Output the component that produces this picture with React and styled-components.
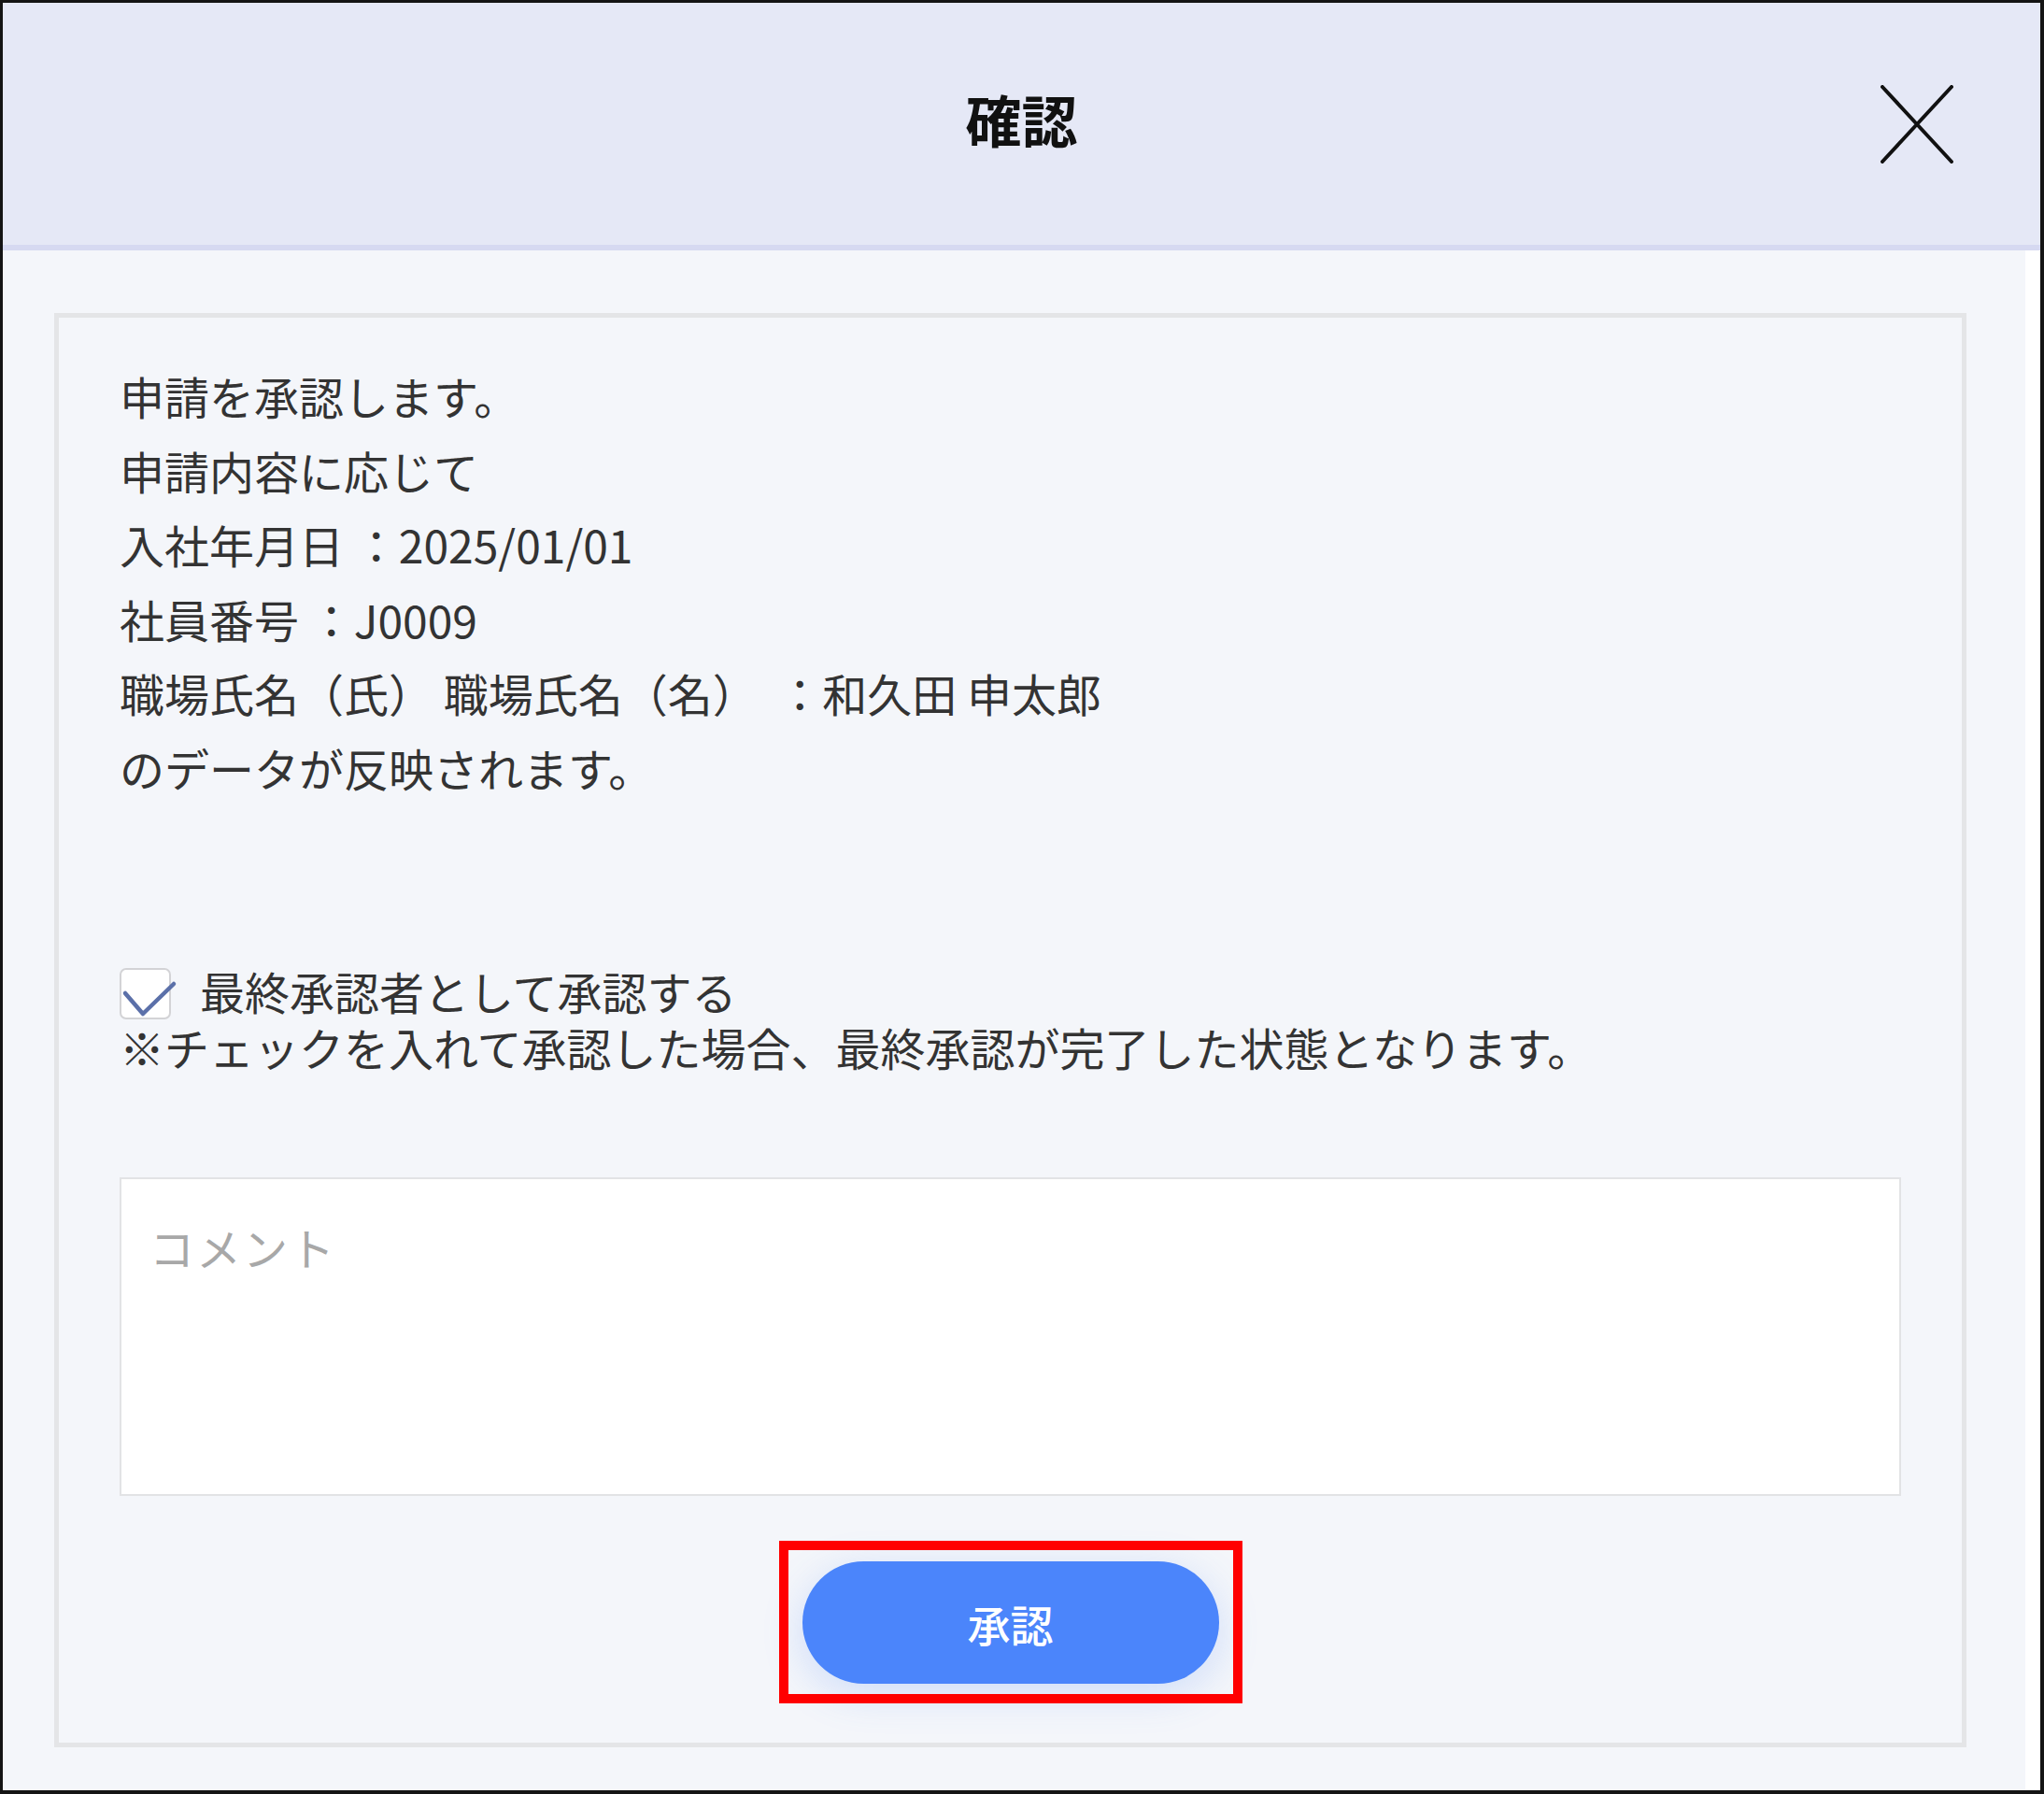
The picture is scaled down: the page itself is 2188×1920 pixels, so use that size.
import React from 'react';
import styled, { createGlobalStyle } from 'styled-components';

const GlobalStyle = createGlobalStyle`
    html, body {
        margin: 0;
        padding: 0;
        background: #ffffff;
    }
    * {
        box-sizing: border-box;
    }
`;

const font = `"Noto Sans CJK JP", "Noto Sans", sans-serif`;

const Frame = styled.div`
    width: 2188px;
    height: 1920px;
    border-style: solid;
    border-color: #141414;
    border-width: 3px 4px 4px 3px;
    display: flex;
    flex-direction: column;
    font-family: ${font};
    color: #333333;
`;

const Header = styled.header`
    height: 265px;
    flex-shrink: 0;
    background: #e5e8f6;
    border-bottom: 6px solid #d6d9f1;
    display: grid;
    grid-template-columns: 1fr auto 1fr;
    align-items: center;
`;

const Title = styled.h1`
    grid-column: 2;
    margin: 0 0 12px;
    font-size: 60px;
    font-weight: 700;
    line-height: 1;
    color: #111111;
`;

const CloseButton = styled.button`
    grid-column: 3;
    justify-self: end;
    margin-right: 93px;
    width: 78px;
    height: 84px;
    padding: 0;
    border: 0;
    background: transparent;
    cursor: pointer;
    display: flex;
`;

const Body = styled.div`
    flex: 1;
    display: flex;
`;

const Main = styled.main`
    flex: 1;
    background: #f4f6fa;
    padding: 67px 63px 0 55px;
`;

const Gutter = styled.div`
    width: 16px;
    background: #ffffff;
`;

const Panel = styled.section`
    border: 5px solid #e4e5e7;
    background: #f4f6fa;
    padding: 44px 65px 63px 65px;
    display: flex;
    flex-direction: column;
`;

const Message = styled.div`
    font-size: 48px;
    line-height: 79.5px;
`;

const Line = styled.p`
    margin: 0;
    white-space: pre;
`;

const CheckRow = styled.label`
    margin-top: 169px;
    display: flex;
    align-items: center;
    gap: 31px;
    height: 60px;
    font-size: 48px;
    line-height: 60px;
    cursor: pointer;
`;

const CheckBox = styled.span`
    position: relative;
    width: 55px;
    height: 55px;
    flex-shrink: 0;
    margin-top: 6px;
    border: 2px solid #d3d3d6;
    border-radius: 7px;
    background: #ffffff;

    svg {
        position: absolute;
        left: -2px;
        top: -2px;
        overflow: visible;
    }
`;

const Note = styled.p`
    margin: 0;
    font-size: 48px;
    line-height: 60px;
`;

const Comment = styled.textarea`
    margin-top: 110px;
    height: 341px;
    width: 100%;
    resize: none;
    border: 2px solid #e2e3e5;
    background: #ffffff;
    padding: 42px 30px;
    font-family: ${font};
    font-size: 48px;
    line-height: 60px;
    color: #333333;
    outline: none;

    &::placeholder {
        color: #a8a8a8;
        letter-spacing: 2px;
    }
`;

const Actions = styled.div`
    margin-top: 70px;
    display: flex;
    justify-content: center;
`;

const ButtonWrap = styled.div`
    position: relative;
`;

const ApproveButton = styled.button`
    width: 446px;
    height: 131px;
    border: 0;
    border-radius: 66px;
    background: #4b85fb;
    color: #ffffff;
    font-family: ${font};
    font-size: 46px;
    font-weight: 500;
    box-shadow: 0 10px 44px rgba(75, 133, 251, 0.22);
    cursor: pointer;
`;

const Highlight = styled.span`
    position: absolute;
    top: -22px;
    bottom: -21px;
    left: -25px;
    right: -25px;
    border: 10px solid #ff0000;
    pointer-events: none;
`;

const lines = [
    '申請を承認します。',
    '申請内容に応じて',
    '入社年月日 ：2025/01/01',
    '社員番号 ：J0009',
    '職場氏名（氏） 職場氏名（名）  ：和久田 申太郎',
    'のデータが反映されます。',
];

export default function App() {
    return (
        <>
            <GlobalStyle />
            <Frame>
                <Header>
                    <Title>確認</Title>
                    <CloseButton aria-label="閉じる">
                        <svg width="78" height="84" viewBox="0 0 78 84">
                            <path d="M2 2 L76 82 M76 2 L2 82" stroke="#111" strokeWidth="4" strokeLinecap="round" fill="none" />
                        </svg>
                    </CloseButton>
                </Header>
                <Body>
                    <Main>
                        <Panel>
                            <Message>
                                {lines.map((l) => (
                                    <Line key={l}>{l}</Line>
                                ))}
                            </Message>
                            <CheckRow>
                                <CheckBox>
                                    <svg width="59" height="55" viewBox="0 0 59 55">
                                        <path d="M6 27 L25 49 L58 17" stroke="#5b70a9" strokeWidth="4.5" strokeLinecap="round" strokeLinejoin="round" fill="none" />
                                    </svg>
                                </CheckBox>
                                最終承認者として承認する
                            </CheckRow>
                            <Note>※チェックを入れて承認した場合、最終承認が完了した状態となります。</Note>
                            <Comment placeholder="コメント" />
                            <Actions>
                                <ButtonWrap>
                                    <ApproveButton>承認</ApproveButton>
                                    <Highlight />
                                </ButtonWrap>
                            </Actions>
                        </Panel>
                    </Main>
                    <Gutter />
                </Body>
            </Frame>
        </>
    );
}
